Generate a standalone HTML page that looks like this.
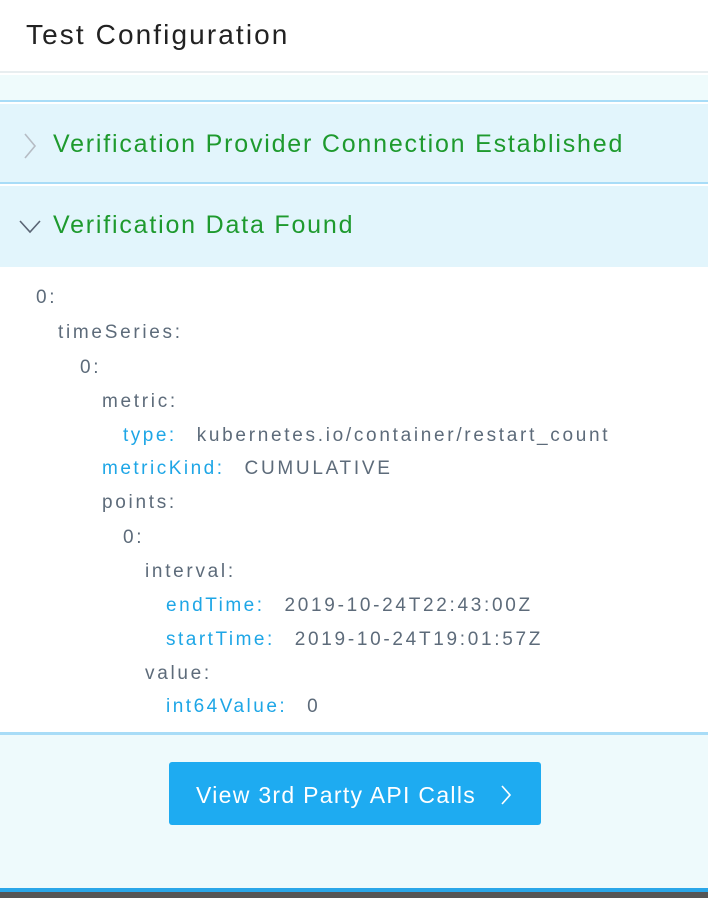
<!DOCTYPE html>
<html><head><meta charset="utf-8"><style>
*{margin:0;padding:0;box-sizing:border-box}
body{width:708px;height:898px;overflow:hidden;font-family:"Liberation Sans",sans-serif;background:#fff;position:relative}
.hdr{position:absolute;left:0;top:0;width:708px;height:73px;background:#fff;border-bottom:2px solid #e8eef0}
.hdr span{position:absolute;left:26px;top:19px;font-size:28px;color:#222;letter-spacing:2.1px}
.band{position:absolute;left:0;top:75px;width:708px;height:27px;background:#effbfc;border-bottom:2px solid #a8dcf7}
.acc{position:absolute;left:0;width:708px;background:#e2f5fc;color:#1e9a2e;font-size:25px;letter-spacing:1.8px}
.acc span{position:absolute;left:53px;top:26px}
.content{position:absolute;left:3px;top:267px;width:705px;height:465px;background:#fff}
.row{position:absolute;font-size:19px;color:#5d6b7a;white-space:nowrap;letter-spacing:2.7px}
.k{color:#1ea6e6;margin-right:20px;letter-spacing:2.5px}
.foot{position:absolute;left:0;top:732px;width:708px;height:156px;background:#eefafc;border-top:3px solid #a8dcf7}
.btn{position:absolute;left:169px;top:762px;width:372px;height:63px;background:#1eabf1;border-radius:3px;color:#fff;font-size:23px;letter-spacing:1.3px}
.btn span{position:absolute;left:27px;top:20px}
.bar{position:absolute;left:0;top:888px;width:708px;height:4px;background:#2aa6e8}
.dark{position:absolute;left:0;top:892px;width:708px;height:6px;background:#555}
</style></head><body>
<div class="hdr"><span>Test Configuration</span></div>
<div class="band"></div>
<div class="acc" style="top:104px;height:80px;border-bottom:2px solid #a8dcf7">
<svg style="position:absolute;left:22px;top:28px" width="16" height="28"><path d="M3 2 L13 14 L3 26" fill="none" stroke="#b6bcc4" stroke-width="1.6"/></svg>
<span>Verification Provider Connection Established</span></div>
<div class="acc" style="top:186px;height:81px">
<svg style="position:absolute;left:18px;top:32px" width="26" height="18"><path d="M2 3 L12 14 L22 3" fill="none" stroke="#5a6575" stroke-width="1.6"/></svg>
<span style="top:25px">Verification Data Found</span></div>
<div class="content"></div>
<div class="row" style="left:36px;top:287px">0:</div>
<div class="row" style="left:58px;top:322px">timeSeries:</div>
<div class="row" style="left:80px;top:357px">0:</div>
<div class="row" style="left:102px;top:391px">metric:</div>
<div class="row" style="left:123px;top:425px"><span class="k">type:</span>kubernetes.io/container/restart_count</div>
<div class="row" style="left:102px;top:458px"><span class="k">metricKind:</span>CUMULATIVE</div>
<div class="row" style="left:102px;top:492px">points:</div>
<div class="row" style="left:123px;top:527px">0:</div>
<div class="row" style="left:145px;top:561px">interval:</div>
<div class="row" style="left:166px;top:595px"><span class="k">endTime:</span>2019-10-24T22:43:00Z</div>
<div class="row" style="left:166px;top:629px"><span class="k">startTime:</span>2019-10-24T19:01:57Z</div>
<div class="row" style="left:145px;top:663px">value:</div>
<div class="row" style="left:166px;top:696px"><span class="k">int64Value:</span>0</div>
<div class="foot"></div>
<div class="btn"><span>View 3rd Party API Calls</span>
<svg style="position:absolute;left:330px;top:22px" width="14" height="22"><path d="M3 2 L11 11 L3 20" fill="none" stroke="#fff" stroke-width="1.6"/></svg></div>
<div class="bar"></div><div class="dark"></div>
</body></html>
